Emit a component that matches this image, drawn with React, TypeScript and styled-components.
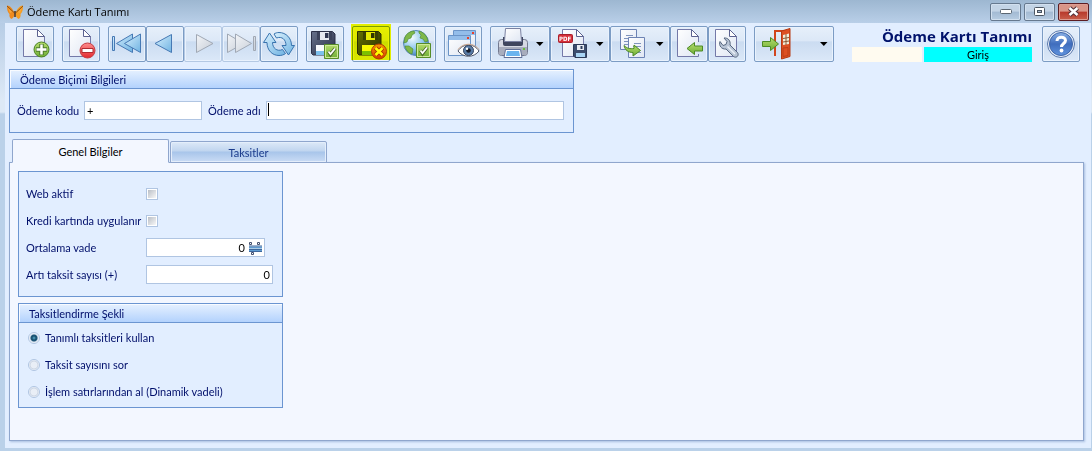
import React from "react";
import styled, { createGlobalStyle, css } from "styled-components";

const GlobalStyle = createGlobalStyle`
  *, *::before, *::after { box-sizing: border-box; }
  body { margin: 0; }
  button, input { font: inherit; }
`;

const colors = {
  text: "#000f6b",
  surface: "#e2eeff",
  line: "#6b95d1",
  inputLine: "#b0c5e2",
  panel: "#f3f7ff",
  panelLine: "#8fa6cd",
};

/* ---------- window frame ---------- */

const Window = styled.div`
  display: flex;
  flex-direction: column;
  min-height: 100vh;
  padding: 0 1px 3px 5px;
  background: linear-gradient(#9fb8d2 0, #b7cde6 23px, #dde9f6 100px, #dde9f6 112px, #bad1e9 114px);
  color: ${colors.text};
  font-family: Lato, "Liberation Sans", sans-serif;
  font-size: 11px;
  line-height: 14px;
`;

const TitleBar = styled.header`
  display: flex;
  align-items: center;
  gap: 4px;
  height: 23px;
  margin: 0 -1px 0 -5px;
  padding: 0 3px 0 7px;
  background: linear-gradient(#9db7d1, #b9cfe8);
`;

const WindowTitle = styled.h1`
  flex: 1;
  margin: 0;
  color: #000;
  font: 400 11px/16px "Open Sans", "Noto Sans", sans-serif;
`;

const WindowControls = styled.div`
  display: flex;
  gap: 3px;
  height: 18px;
`;

const WindowButton = styled.button<{ $danger?: boolean }>`
  display: grid;
  place-items: center;
  width: 31px;
  height: 18px;
  padding: 0;
  border: 1px solid ${(p) => (p.$danger ? "#5c1d22" : "#66798f")};
  border-radius: 2px;
  box-shadow: inset 0 0 0 1px ${(p) => (p.$danger ? "#dd9d93" : "#d2e0ef")};
  background: ${(p) =>
    p.$danger
      ? "linear-gradient(#d99587 0 45%, #b8392b 50%, #c9604c)"
      : "linear-gradient(#c3d4e6 0 45%, #a3bad3 50%, #b8cde2)"};
`;

const Body = styled.main`
  display: flex;
  flex: 1;
  flex-direction: column;
  padding: 3px 7px 7px 4px;
  background: ${colors.surface};
`;

/* ---------- toolbar ---------- */

const Toolbar = styled.div`
  display: flex;
  gap: 8px;
  padding: 0 4px 0 7px;
`;

const ToolGroup = styled.div`
  display: flex;
`;

const ToolButton = styled.button<{ $width?: number; $marked?: boolean }>`
  position: relative;
  width: ${(p) => p.$width ?? 38}px;
  height: 36px;
  padding: 0;
  border: 1px solid #7c9cc4;
  border-radius: 2px;
  background: linear-gradient(#e6effa 0, #dce8f7 40%, #cbdcf1 44%, #dbe8f8 100%);
  box-shadow: inset 0 0 0 1px #e9f2fd;

  &:disabled {
    border-color: #b4c9e4;
  }

  svg {
    display: block;
  }

  ${(p) =>
    p.$marked &&
    css`
      &::after {
        content: "";
        position: absolute;
        inset: -3px -2px 1px;
        background: #ff0;
        mix-blend-mode: multiply;
      }
    `}
`;

const ScreenInfo = styled.div`
  display: flex;
  flex: 1;
  flex-direction: column;
  align-items: flex-end;
  padding-right: 2px;
`;

const ScreenTitle = styled.h2`
  margin: 0;
  color: #00126b;
  font: 700 15px/21px "Open Sans", "Noto Sans", sans-serif;
  white-space: nowrap;
`;

const StatusRow = styled.div`
  display: flex;
  gap: 2px;
  color: #000;
  line-height: 16px;
  text-align: center;
`;

const StatusCell = styled.div<{ $width: number; $color: string }>`
  width: ${(p) => p.$width}px;
  height: 15px;
  background: ${(p) => p.$color};
`;

/* ---------- form ---------- */

const GroupBox = styled.fieldset<{ $width: number }>`
  width: ${(p) => p.$width}px;
  min-width: 0;
  margin: 0;
  padding: 0;
  border: 1px solid ${colors.line};
  background: ${colors.surface};
`;

const HeaderBox = styled(GroupBox)`
  margin-top: 7px;
`;

const GroupTitle = styled.div`
  height: 19px;
  padding: 3px 10px 0;
  border-bottom: 1px solid ${colors.line};
  background: linear-gradient(#e6f1ff, #b3d2fd);
  box-shadow: inset 1px 1px 0 #f8fbff;
`;

const HeaderFields = styled.div`
  display: grid;
  grid-template-columns: 67px 118px 64px 1fr;
  align-items: center;
  padding: 12px 9px 12px 7px;
`;

const IndentedLabel = styled.label`
  padding-left: 6px;
`;

const Field = styled.div<{ $width?: number }>`
  position: relative;
  display: flex;
  align-items: center;
  width: ${(p) => (p.$width ? `${p.$width}px` : "auto")};
  height: 19px;
  border: 1px solid ${colors.inputLine};
  background: #fff;
`;

const Caret = styled.span`
  position: absolute;
  left: 1px;
  top: 1px;
  width: 1px;
  height: 13px;
  background: #000;
`;

const TextInput = styled.input<{ $numeric?: boolean }>`
  flex: 1;
  min-width: 0;
  height: 17px;
  padding: 0 2px;
  border: 0;
  outline: 0;
  background: transparent;
  color: #000;
  text-align: ${(p) => (p.$numeric ? "right" : "left")};
`;

const PickerButton = styled.button`
  display: grid;
  place-items: end center;
  width: 17px;
  height: 17px;
  padding: 0 0 1px;
  border: 0;
  background: none;
`;

const Tabs = styled.div`
  display: flex;
  align-items: flex-end;
  gap: 1px;
  height: 24px;
  margin-top: 6px;
  padding-left: 3px;
`;

const Tab = styled.button<{ $active?: boolean }>`
  position: relative;
  z-index: 1;
  width: 157px;
  height: ${(p) => (p.$active ? 24 : 22)}px;
  padding: 2px 0 0;
  border: 1px solid ${colors.panelLine};
  border-bottom-color: ${(p) => (p.$active ? colors.panel : colors.panelLine)};
  border-radius: 2px 2px 0 0;
  color: ${(p) => (p.$active ? "#000" : "#1c3c8c")};
  background: ${(p) =>
    p.$active ? colors.panel : "linear-gradient(#dde9f8 0, #c0d5ef 45%, #a8c5ea 50%, #cadcf5 100%)"};
  box-shadow: ${(p) => (p.$active ? "none" : "inset 0 0 0 1px #e4eefb")};
`;

const TabPanel = styled.section`
  display: flex;
  flex: 1;
  flex-direction: column;
  gap: 6px;
  margin-top: -1px;
  padding: 8px;
  border: 1px solid ${colors.panelLine};
  background: ${colors.panel};
  box-shadow: 1px 1px 2px #a9bfe0;
`;

const SettingsGrid = styled.div`
  display: grid;
  grid-template-columns: 120px 1fr;
  grid-auto-rows: 27px;
  align-items: center;
  padding: 8px 7px;
`;

const choice = css`
  appearance: none;
  width: 12px;
  height: 12px;
  margin: 0;
  border: 1px solid ${colors.inputLine};
`;

const Checkbox = styled.input`
  ${choice}
  padding: 1px;
  background: linear-gradient(135deg, #b9bec6, #f8f8f8) content-box, #fff;
`;

const RadioList = styled.div`
  display: flex;
  flex-direction: column;
  gap: 13px;
  padding: 8px 9px;
`;

const RadioRow = styled.label`
  display: flex;
  align-items: center;
  gap: 5px;
`;

const Radio = styled.input`
  ${choice}
  border-radius: 50%;
  background: radial-gradient(circle, #e9eef6 0 3px, #c9d3e2 4px, #f5f8fd 5px);

  &:checked {
    background: radial-gradient(circle at 50% 50%, #5fb0cf 0, #17506f 2px, #20587a 3px, #d5dfec 4px, #f5f8fd 5px);
  }
`;

/* ---------- icons ---------- */

const Canvas = ({ width = 36, children }: { width?: number; children: React.ReactNode }) => (
  <svg width={width} height="34" viewBox={`0 0 ${width} 34`} fill="none" aria-hidden="true">
    {children}
  </svg>
);

const HiddenSvg = styled.svg`
  position: absolute;
`;

const Gradients = () => (
  <HiddenSvg width="0" height="0" aria-hidden="true">
    <defs>
      <linearGradient id="paper" x1="0" y1="0" x2="1" y2="1">
        <stop offset="0" stopColor="#fff" />
        <stop offset="1" stopColor="#dfe6f3" />
      </linearGradient>
      <linearGradient id="green" x1="0" y1="0" x2="0" y2="1">
        <stop offset="0" stopColor="#b5dc6c" />
        <stop offset="1" stopColor="#6fae36" />
      </linearGradient>
      <linearGradient id="red" x1="0" y1="0" x2="0" y2="1">
        <stop offset="0" stopColor="#ff8d8d" />
        <stop offset="1" stopColor="#e2282d" />
      </linearGradient>
      <linearGradient id="orange" x1="0" y1="0" x2="0" y2="1">
        <stop offset="0" stopColor="#f79a4a" />
        <stop offset="1" stopColor="#d63a12" />
      </linearGradient>
      <linearGradient id="blue" x1="0" y1="0" x2="1" y2="1">
        <stop offset="0" stopColor="#d9f0fd" />
        <stop offset="1" stopColor="#6fb3e2" />
      </linearGradient>
      <linearGradient id="grey" x1="0" y1="0" x2="1" y2="1">
        <stop offset="0" stopColor="#f3f5f8" />
        <stop offset="1" stopColor="#c5ccd6" />
      </linearGradient>
      <linearGradient id="disk" x1="0" y1="0" x2="1" y2="1">
        <stop offset="0" stopColor="#66708a" />
        <stop offset="1" stopColor="#2a3048" />
      </linearGradient>
      <radialGradient id="sea" cx="0.35" cy="0.3" r="0.75">
        <stop offset="0" stopColor="#f2fbff" />
        <stop offset="0.6" stopColor="#8cc4ec" />
        <stop offset="1" stopColor="#3d7bb8" />
      </radialGradient>
      <linearGradient id="help" x1="0" y1="0" x2="0" y2="1">
        <stop offset="0" stopColor="#8ab0e6" />
        <stop offset="0.5" stopColor="#3f6dbd" />
        <stop offset="1" stopColor="#5f93de" />
      </linearGradient>
    </defs>
  </HiddenSvg>
);

const Page = () => (
  <>
    <path d="M6.500 2.500h14l7 7v20h-21z" fill="url(#paper)" stroke="#7479a8" />
    <path d="M20.500 2.500v7h7z" fill="#fff" stroke="#5c628f" strokeLinejoin="round" />
  </>
);

const Floppy = () => (
  <>
    <path d="M4.500 4.500h21l2.500 2.500v21h-22l-1.500-1.500z" fill="url(#disk)" stroke="#2c3148" />
    <path d="M10 5h15v8H10z" fill="#3b425a" />
    <path d="M13 5h9v8h-9z" fill="#e6e9f0" />
    <path d="M18 6h3.500v5H18z" fill="#2f3650" />
    <path d="M9 18h16v10H9z" fill="#f7f9fc" />
    <path d="M9 24h16v4H9z" fill="#7cc0ee" />
  </>
);

const CheckBadge = ({ y }: { y: number }) => (
  <g transform={`translate(17 ${y})`}>
    <path d="M.5.5h14v14H.5z" fill="url(#green)" stroke="#568c28" />
    <path d="M1.500 1.500h12v12h-12z" stroke="#cfe99a" />
    <path d="M4.500 7.500l2 3L11 4.500" stroke="#4a6a2a" strokeWidth="3.500" />
    <path d="M4.500 7.500l2 2.500L11 4.500" stroke="#fff" strokeWidth="1.800" />
  </g>
);

const Arrow = () => <path d="M45 15h7.500l-3.700 4z" fill="#000" />;

const NewIcon = () => (
  <Canvas>
    <Page />
    <circle cx="24.500" cy="22.500" r="7.500" fill="url(#green)" stroke="#4c8226" />
    <path d="M24.500 17v11M19 22.500h11" stroke="#4c7a2c" strokeWidth="4.500" />
    <path d="M24.500 17.500v10M19.500 22.500h10" stroke="#fff" strokeWidth="2.500" />
  </Canvas>
);

const DeleteIcon = () => (
  <Canvas>
    <Page />
    <circle cx="24.500" cy="23.500" r="7.500" fill="url(#red)" stroke="#c43c42" />
    <path d="M19 21.500h11v4H19z" fill="#fff" stroke="#b12a30" />
  </Canvas>
);

const FirstIcon = () => (
  <Canvas>
    <g fill="url(#blue)" stroke="#4679b4" strokeLinejoin="round">
      <path d="M3.500 9.500h2v14h-2zM23.500 7v18.500L7.500 16.500z" />
      <path d="M31.500 7v18.500L15.500 16.500z" />
    </g>
  </Canvas>
);

const PrevIcon = () => (
  <Canvas>
    <path d="M24.500 7.500v18L8 16.500z" fill="url(#blue)" stroke="#4679b4" strokeLinejoin="round" />
  </Canvas>
);

const NextIcon = () => (
  <Canvas>
    <path d="M11.500 7.500v18L28 16.500z" fill="url(#grey)" stroke="#a0a8b4" strokeLinejoin="round" />
  </Canvas>
);

const LastIcon = () => (
  <Canvas>
    <g fill="url(#grey)" stroke="#a0a8b4" strokeLinejoin="round">
      <path d="M4.500 7v18.500L20.500 16.500z" />
      <path d="M12.500 7v18.500L28.500 16.500zM30.500 9.500h2v14h-2z" />
    </g>
  </Canvas>
);

const RefreshIcon = () => (
  <Canvas>
    <g fill="url(#blue)" stroke="#3873ae" strokeLinejoin="round">
      <path d="M8.500 6L2.500 15.500H6C6 23 11 28.500 18 28.500c2.500 0 4.500-.5 6.500-2L21.500 22.500C16 25 11.500 21 11.500 15.500H15z" />
      <path d="M27.500 28L33.500 18.500H30.500C30.500 11 25 5.500 18 5.500c-2 0-3.500.5-5 1.500l2.500 4C21 9 25 12.500 25 18.500H21z" />
    </g>
  </Canvas>
);

const SaveIcon = () => (
  <Canvas>
    <Floppy />
    <CheckBadge y={17} />
  </Canvas>
);

const SaveCancelIcon = () => (
  <Canvas>
    <Floppy />
    <circle cx="26" cy="24.500" r="7.500" fill="url(#orange)" stroke="#b03c10" />
    <path d="M22.500 21l7 7M29.500 21l-7 7" stroke="#a83208" strokeWidth="4.500" />
    <path d="M22.500 21l7 7M29.500 21l-7 7" stroke="#fff" strokeWidth="2.500" />
  </Canvas>
);

const GlobeIcon = () => (
  <Canvas>
    <circle cx="17" cy="16" r="12.500" fill="url(#sea)" stroke="#5586b5" />
    <path
      d="M6 10C8 6 11 4.500 15 4l1 2-3 2-1 3-3 1-1 3-3 1zM20 4c5 1.500 8 5 9 10l-3 1-2-3-3-1 1-3-2-2zM6 19l4 0 4 3-1 5c-4-1-6-4-7-8z"
      fill="#7fb84a"
      stroke="#4b8a2c"
      strokeWidth=".6"
    />
    <CheckBadge y={16} />
  </Canvas>
);

const PreviewIcon = () => (
  <Canvas>
    <path d="M8.500 3.500h22v19h-22z" fill="url(#paper)" stroke="#6a94c8" />
    <path d="M9 4h21v4H9z" fill="#93bdea" />
    <path d="M27 5h2v2h-2z" fill="#e8402c" />
    <path d="M3.500 8.500h22v20h-22z" fill="url(#paper)" stroke="#6a94c8" />
    <path d="M4 9h21v4H4z" fill="#93bdea" />
    <path d="M22 10h2v2h-2z" fill="#e8402c" />
    <path d="M13 24c5-8 16-8 21 0-5 7-16 7-21 0z" fill="#fff" stroke="#4b5468" />
    <path d="M13 22.500c5-7 16-7 21 0" stroke="#c9a48b" />
    <circle cx="23.500" cy="23.500" r="5" fill="#5a7da8" stroke="#33405a" />
    <circle cx="23.500" cy="23.500" r="2.300" fill="#161c2c" />
    <circle cx="22" cy="21.800" r="1.200" fill="#fff" />
  </Canvas>
);

const PrintIcon = () => (
  <Canvas width={58}>
    <rect x="7.500" y="12.500" width="29" height="16" rx="3" fill="#d6d9e3" stroke="#73798f" />
    <path d="M8 20h28v6q0 2-2 2H10q-2 0-2-2z" fill="#a8adbd" />
    <path d="M12 10h20v7q0 2-2 2H14q-2 0-2-2z" fill="#3f465e" />
    <path d="M14.500 1.500h15l1 13h-17z" fill="url(#paper)" stroke="#7b82a2" />
    <path d="M14.500 22.500h15l1.500 8H13z" fill="#fff" stroke="#5f6f98" />
    <path d="M16 24h12l1 5H15z" fill="#6ab4ee" />
    <path d="M32 21h2v2h-2z" fill="#6abf3a" />
    <Arrow />
  </Canvas>
);

const PdfIcon = () => (
  <Canvas width={58}>
    <g transform="translate(5 0)">
      <Page />
    </g>
    <rect x="7.500" y="7.500" width="14" height="8" rx="1" fill="#d6303a" stroke="#a81e2a" />
    <text x="8" y="14" fill="#fff" fontFamily="DejaVu Sans Condensed, sans-serif" fontWeight="700" fontSize="6">
      PDF
    </text>
    <path d="M22.500 17.500h13v13H24l-1.500-1.500z" fill="#3c4d6e" stroke="#2c3a58" />
    <path d="M26 18h7v5h-7z" fill="#e6eaf2" />
    <path d="M29.500 19h2v3h-2z" fill="#2c3a58" />
    <path d="M25 26h9v4h-9z" fill="#a8d4f4" />
    <Arrow />
  </Canvas>
);

const CopyIcon = () => (
  <Canvas width={58}>
    <path d="M9.500 2.500h16v20h-16z" fill="url(#paper)" stroke="#6d83b4" />
    <path d="M15 8.500h7M13 11.500h9M13 14.500h5M13 17.500h5" stroke="#7f93bd" />
    <path d="M17.500 10.500h16v20h-16z" fill="url(#paper)" stroke="#6d83b4" />
    <path d="M23 16.500h7M22 19.500h8M27 25.500h3" stroke="#7f93bd" />
    <path
      d="M13 18.500c3 3 6 3.500 10 3V18l6.500 5.500L22 29v-3.500c-5 0-8-2.500-9-7z"
      fill="url(#green)"
      stroke="#4c8a26"
      strokeLinejoin="round"
    />
    <Arrow />
  </Canvas>
);

const ImportIcon = () => (
  <Canvas>
    <Page />
    <path d="M26 15h5v12h-5z" fill="#d9e6f6" />
    <path
      d="M16 21.500l7.500-6v3.500h8v5h-8v3.500z"
      fill="url(#green)"
      stroke="#4c8a26"
      strokeLinejoin="round"
    />
  </Canvas>
);

const SettingsIcon = () => (
  <Canvas>
    <Page />
    <path
      d="M11 14.500c-1.500 4 1.500 8 6 7.500l7.500 7.500c3 2 6-1 4-4L21 18c1-4-2-7.500-6-7l3 3.500-1 3-3 1z"
      fill="#b9c5d6"
      stroke="#56667f"
      strokeLinejoin="round"
    />
    <path d="M18.500 19.500l7.500 7.500" stroke="#e9eff7" strokeWidth="1.500" />
  </Canvas>
);

const ExitIcon = () => (
  <Canvas width={78}>
    <path d="M20 29V4h10" stroke="#d1451d" strokeWidth="2" />
    <path d="M26.500 4l8.500-2.500v28L26.500 32z" fill="#dd5023" stroke="#b53a14" />
    <path d="M28 8l6-1.500v10.500l-6 1z" fill="#f2ecd8" />
    <path d="M31 7v11M28 11.500l6-1M28 15l6-1" stroke="#8a5a38" />
    <path d="M28 21l5-.5v8l-5 1z" stroke="#bd3f17" />
    <path
      d="M7.500 14.500h8v-4l8 6.500-8 6.500v-4h-8z"
      fill="url(#green)"
      stroke="#4c8a26"
      strokeLinejoin="round"
    />
    <path d="M65 15h7.500l-3.700 4z" fill="#000" />
  </Canvas>
);

const HelpIcon = () => (
  <Canvas>
    <circle cx="18" cy="17" r="13.500" fill="#e9f0fa" stroke="#5b79ac" />
    <circle cx="18" cy="17" r="11.500" fill="url(#help)" stroke="#3f66a8" />
    <path d="M14 14c0-5 8.500-5 8.500-.5 0 3-4 3-4 6.500" stroke="#fff" strokeWidth="3" />
    <circle cx="18.500" cy="23.500" r="1.900" fill="#fff" />
  </Canvas>
);

const Butterfly = () => (
  <svg width="16" height="16" viewBox="0 0 16 16" aria-hidden="true">
    <path d="M7.500 9C6 5 3 1.500 0 1.500c0 4 .5 7 2.500 8.500-.5 2.500 .5 4.500 2 5 2-1 3-3 3-6z" fill="#ee8a1e" />
    <path d="M8.500 9C10 5 13 1.500 16 1.500c0 4-.5 7-2.500 8.500 .5 2.500-.5 4.500-2 5-2-1-3-3-3-6z" fill="#f59c22" />
    <path d="M0 2l7.500 7M16 2L8.500 9" fill="none" stroke="#8a5318" strokeWidth="1" />
    <path d="M8 7v6" stroke="#4a2d14" strokeWidth="1.500" />
    <path d="M1 4l4 4-2 1zM15 4l-4 4 2 1z" fill="#f9a83a" />
  </svg>
);

const PickerIcon = () => (
  <svg width="15" height="13" viewBox="0 0 15 13" fill="none" aria-hidden="true">
    <path d="M1 4.500h13v2H1zM1 8h13v1.500H1z" fill="#5f9bd0" />
    <path d="M1 4h13M1 7.500h13M1 9.500h13" stroke="#3e679c" />
    <path d="M1.500.5h2v2h-2zM9.500.5h2v2h-2zM3.500 10.500h2v2h-2z" fill="#fff" stroke="#44506e" />
  </svg>
);

/* ---------- screen ---------- */

type Tool = { label: string; icon: React.ReactNode; width?: number; marked?: boolean; disabled?: boolean };

const toolGroups: Tool[][] = [
  [{ label: "Yeni", icon: <NewIcon /> }],
  [{ label: "Sil", icon: <DeleteIcon /> }],
  [
    { label: "İlk kayıt", icon: <FirstIcon /> },
    { label: "Önceki kayıt", icon: <PrevIcon /> },
    { label: "Sonraki kayıt", icon: <NextIcon />, disabled: true },
    { label: "Son kayıt", icon: <LastIcon />, disabled: true },
    { label: "Yenile", icon: <RefreshIcon /> },
  ],
  [{ label: "Kaydet", icon: <SaveIcon /> }],
  [{ label: "Vazgeç", icon: <SaveCancelIcon />, marked: true }],
  [{ label: "Web", icon: <GlobeIcon /> }],
  [{ label: "Önizleme", icon: <PreviewIcon /> }],
  [
    { label: "Yazdır", icon: <PrintIcon />, width: 60 },
    { label: "PDF kaydet", icon: <PdfIcon />, width: 60 },
    { label: "Kopyala", icon: <CopyIcon />, width: 60 },
    { label: "İçeri al", icon: <ImportIcon /> },
    { label: "Ayarlar", icon: <SettingsIcon /> },
  ],
  [{ label: "Çıkış", icon: <ExitIcon />, width: 80 }],
];

const plans = ["Tanımlı taksitleri kullan", "Taksit sayısını sor", "İşlem satırlarından al (Dinamik vadeli)"];

export default function App() {
  return (
    <Window>
      <GlobalStyle />
      <Gradients />
      <TitleBar>
        <Butterfly />
        <WindowTitle>Ödeme Kartı Tanımı</WindowTitle>
        <WindowControls>
          <WindowButton aria-label="Simge durumuna küçült">
            <svg width="12" height="5" viewBox="0 0 12 5">
              <rect x=".5" y=".5" width="11" height="4" rx="1" fill="#fff" stroke="#5b6672" />
            </svg>
          </WindowButton>
          <WindowButton aria-label="Ekranı kapla">
            <svg width="11" height="9" viewBox="0 0 11 9">
              <rect x=".5" y=".5" width="10" height="8" rx="1" fill="#fff" stroke="#4b5561" />
              <rect x="3.500" y="3.500" width="4" height="2" fill="#a9bdd4" stroke="#4b5561" />
            </svg>
          </WindowButton>
          <WindowButton $danger aria-label="Kapat">
            <svg width="13" height="11" viewBox="0 0 13 11">
              <path d="M2.500 2l8 7M10.500 2l-8 7" stroke="#4e3038" strokeWidth="4.500" />
              <path d="M2.500 2l8 7M10.500 2l-8 7" stroke="#fff" strokeWidth="2.500" />
            </svg>
          </WindowButton>
        </WindowControls>
      </TitleBar>

      <Body>
        <Toolbar>
          {toolGroups.map((group, index) => (
            <ToolGroup key={index}>
              {group.map((tool) => (
                <ToolButton
                  key={tool.label}
                  aria-label={tool.label}
                  disabled={tool.disabled}
                  $width={tool.width}
                  $marked={tool.marked}
                >
                  {tool.icon}
                </ToolButton>
              ))}
            </ToolGroup>
          ))}
          <ScreenInfo>
            <ScreenTitle>Ödeme Kartı Tanımı</ScreenTitle>
            <StatusRow>
              <StatusCell $width={70} $color="#fffbf0" />
              <StatusCell $width={108} $color="#00ffff">
                Giriş
              </StatusCell>
            </StatusRow>
          </ScreenInfo>
          <ToolButton aria-label="Yardım">
            <HelpIcon />
          </ToolButton>
        </Toolbar>

        <HeaderBox $width={565} aria-label="Ödeme Biçimi Bilgileri">
          <GroupTitle>Ödeme Biçimi Bilgileri</GroupTitle>
          <HeaderFields>
            <label htmlFor="code">Ödeme kodu</label>
            <Field>
              <TextInput id="code" defaultValue="+" />
            </Field>
            <IndentedLabel htmlFor="name">Ödeme adı</IndentedLabel>
            <Field>
              <Caret />
              <TextInput id="name" />
            </Field>
          </HeaderFields>
        </HeaderBox>

        <Tabs role="tablist">
          <Tab $active role="tab" aria-selected="true">
            Genel Bilgiler
          </Tab>
          <Tab role="tab" aria-selected="false">
            Taksitler
          </Tab>
        </Tabs>

        <TabPanel role="tabpanel">
          <GroupBox $width={265} aria-label="Genel Bilgiler">
            <SettingsGrid>
              <label htmlFor="web">Web aktif</label>
              <Checkbox id="web" type="checkbox" />
              <label htmlFor="card">Kredi kartında uygulanır</label>
              <Checkbox id="card" type="checkbox" />
              <label htmlFor="term">Ortalama vade</label>
              <Field $width={119}>
                <TextInput id="term" $numeric defaultValue="0" />
                <PickerButton aria-label="Vade seç">
                  <PickerIcon />
                </PickerButton>
              </Field>
              <label htmlFor="extra">Artı taksit sayısı (+)</label>
              <Field $width={127}>
                <TextInput id="extra" $numeric defaultValue="0" />
              </Field>
            </SettingsGrid>
          </GroupBox>

          <GroupBox $width={265} aria-label="Taksitlendirme Şekli">
            <GroupTitle>Taksitlendirme Şekli</GroupTitle>
            <RadioList>
              {plans.map((plan, index) => (
                <RadioRow key={plan}>
                  <Radio type="radio" name="plan" defaultChecked={index === 0} />
                  {plan}
                </RadioRow>
              ))}
            </RadioList>
          </GroupBox>
        </TabPanel>
      </Body>
    </Window>
  );
}
